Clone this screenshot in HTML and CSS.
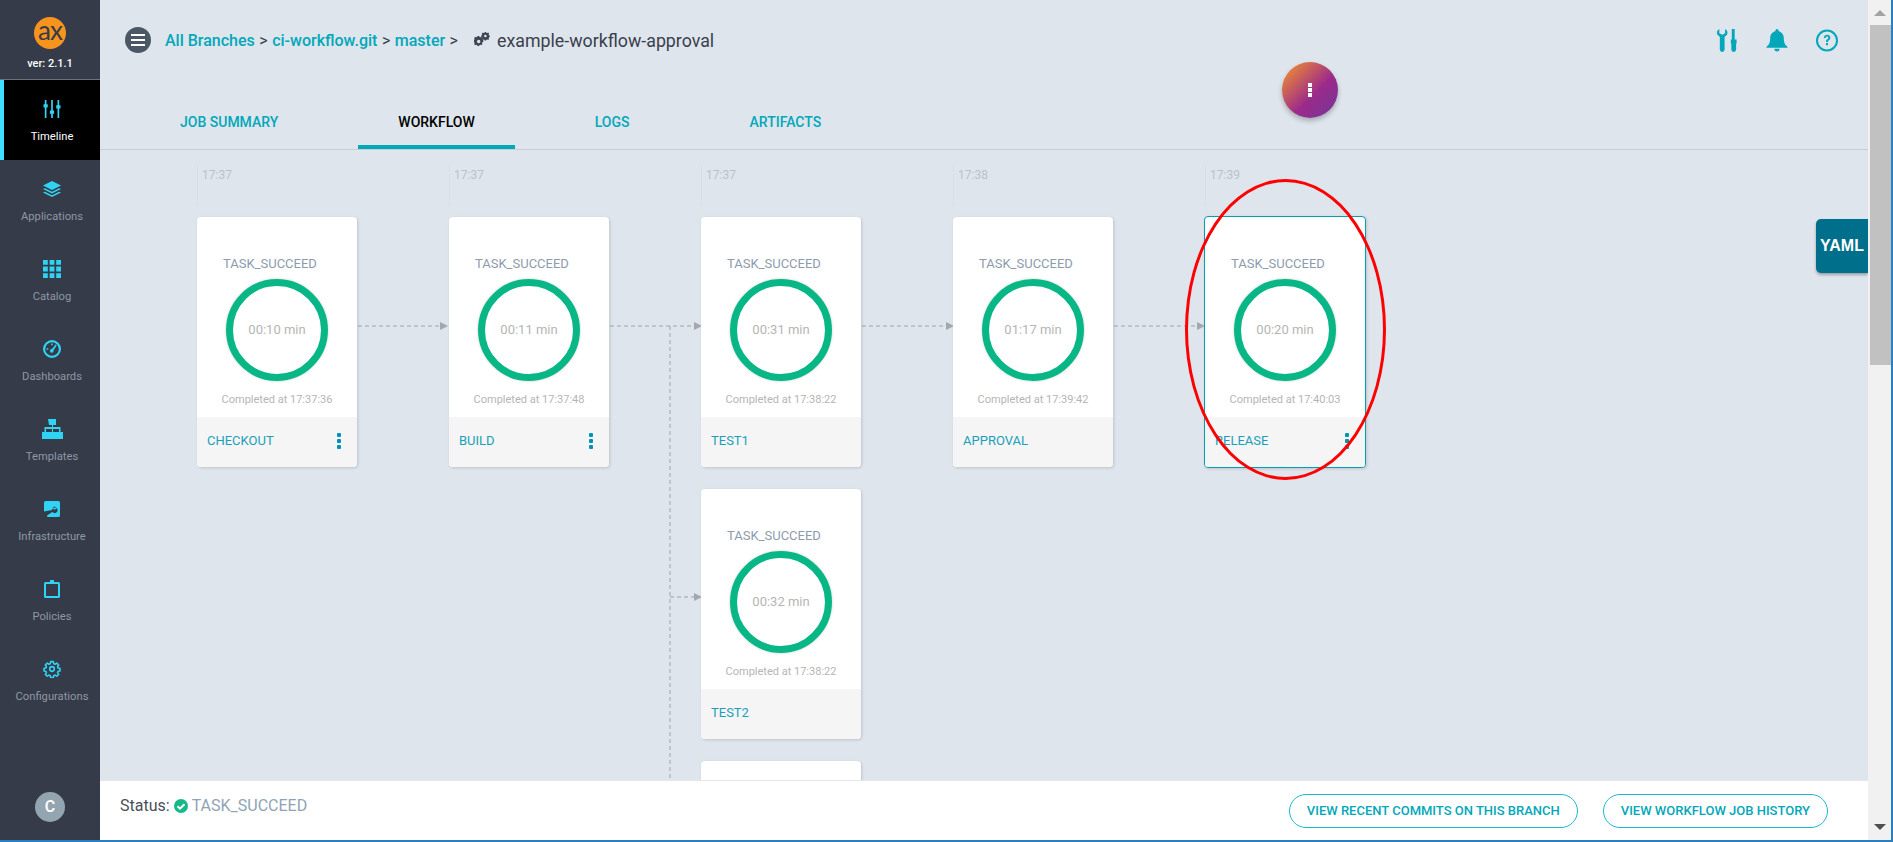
FILE: index.html
```html
<!DOCTYPE html>
<html lang="en">
<head>
  <meta charset="UTF-8" />
  <title>example-workflow-approval</title>
  <link rel="stylesheet" href="styles.css">
</head>
<body>
<div class="window">

  <nav class="sidebar">
    <div class="brand">
      <div class="logo">ax</div>
      <div class="version">ver: 2.1.1</div>
    </div>
    <a class="nav-item active">
      <svg class="nav-icon" viewBox="0 0 16 17"><path d="M1.200 0h1.600v4h1.200v3h-1.200v10h-1.600v-10h-1.200v-3h1.200zM7.200 0h1.600v10h1.200v3h-1.200v4h-1.600v-4h-1.200v-3h1.200zM13.200 0h1.600v5h1.200v3h-1.200v9h-1.600v-9h-1.200v-3h1.200z"/></svg>
      <span>Timeline</span>
    </a>
    <a class="nav-item">
      <svg class="nav-icon" viewBox="0 0 18 16"><path d="M9 0l9 4.500-9 4.500-9-4.500zM1.800 7.200l7.200 3.600 7.200-3.600 1.800.9-9 4.500-9-4.500zM1.800 10.700l7.200 3.600 7.200-3.600 1.800.8-9 4.500-9-4.500z"/></svg>
      <span>Applications</span>
    </a>
    <a class="nav-item">
      <svg class="nav-icon" viewBox="0 0 15 15"><path d="M0 0h4v4h-4zM5.500 0h4v4h-4zM11 0h4v4h-4zM0 5.500h4v4h-4zM5.500 5.500h4v4h-4zM11 5.500h4v4h-4zM0 11h4v4h-4zM5.500 11h4v4h-4zM11 11h4v4h-4z"/></svg>
      <span>Catalog</span>
    </a>
    <a class="nav-item">
      <svg class="nav-icon" viewBox="0 0 18 18"><path fill-rule="evenodd" d="M9 0a9 9 0 1 1 0 18a9 9 0 0 1 0-18zM9 2.200a6.800 6.800 0 1 0 0 13.600a6.800 6.800 0 0 0 0-13.600zM8.200 3.500h1.600v1.800h-1.600zM3.500 8.200h1.800v1.600h-1.800zM12.800 4.200l1 1-3.300 5.200a1.800 1.800 0 1 1-1.500-1.300z"/></svg>
      <span>Dashboards</span>
    </a>
    <a class="nav-item">
      <svg class="nav-icon wide" viewBox="0 0 22 20"><path d="M7 0h8v6h-3v2h7.500v5h2.500v7h-7v-7h3v-3h-6v3h3v7h-7v-7h3v-3h-6v3h3v7h-7v-7h2.500v-5h7.500v-2h-3z"/></svg>
      <span>Templates</span>
    </a>
    <a class="nav-item">
      <svg class="nav-icon" viewBox="-1 -1 18 18"><path fill-rule="evenodd" d="M1.500 0h13a1.500 1.500 0 0 1 1.500 1.500v13a1.500 1.500 0 0 1-1.500 1.500h-10c-1 0-1.500-.5-1.500-1.500l4.500-3 1-.5a2.800 2.800 0 1 0-.5-2l-8 1.500v-9a1.500 1.500 0 0 1 1.500-1.500zM10.500 5.500a1.500 1.500 0 1 1 0 3a1.500 1.500 0 0 1 0-3z"/></svg>
      <span>Infrastructure</span>
    </a>
    <a class="nav-item">
      <svg class="nav-icon" viewBox="0 0 16 18"><path fill-rule="evenodd" d="M6 0h4v2h4.500a1.500 1.500 0 0 1 1.500 1.500v13a1.500 1.500 0 0 1-1.500 1.500h-13a1.500 1.500 0 0 1-1.500-1.500v-13a1.500 1.500 0 0 1 1.500-1.500h4.500zM2 4v12h12v-12z"/></svg>
      <span>Policies</span>
    </a>
    <a class="nav-item">
      <svg class="nav-icon" viewBox="-1.500 -1.500 27 27"><path d="M12 8.500a3.500 3.500 0 1 0 0 7a3.500 3.500 0 0 0 0-7zM10 1h4l.6 3 2 .9 2.600-1.700 2.800 2.800-1.700 2.600.9 2 2.800.4v4l-2.800.4-.9 2 1.700 2.600-2.800 2.800-2.600-1.700-2 .9-.6 3h-4l-.6-3-2-.9-2.600 1.700-2.800-2.800 1.700-2.600-.9-2-2.800-.4v-4l2.800-.4.9-2-1.700-2.600 2.800-2.800 2.600 1.700 2-.9z" fill="none" stroke="#2fd3f3" stroke-width="2.400" stroke-linejoin="round"/></svg>
      <span>Configurations</span>
    </a>
    <div class="avatar">C</div>
  </nav>

  <main class="content">
    <header class="topbar">
      <div class="title-row">
        <button class="menu-btn"><i></i><i></i><i></i></button>
        <div class="crumbs">
          <a>All Branches</a> &gt; <a>ci-workflow.git</a> &gt; <a>master</a> &gt;
          <svg class="cogs" viewBox="0 0 16 16"><path fill-rule="evenodd" d="M5.500 5l1 .3.800-.5 1.200 1.200-.5.800.3 1 1 .3v1.800l-1 .3-.3 1 .5.800-1.200 1.200-.8-.5-1 .3-.3 1h-1.800l-.3-1-1-.3-.8.5-1.200-1.200.5-.8-.3-1-1-.3v-1.800l1-.3.300-1-.5-.8 1.200-1.200.8.500 1-.3.300-1h1.800zM4.700 7.800a1.700 1.700 0 1 0 0 3.400a1.700 1.700 0 0 0 0-3.400zM12 0l.5.900.9.100.7-.4 1 1-.4.700.2.900.8.400v1.400l-.8.400-.2.900.4.700-1 1-.7-.4-.9.200-.5.800h-1.200l-.4-.8-.9-.2-.7.400-1-1 .4-.7-.2-.9-.8-.4v-1.400l.8-.4.2-.9-.4-.7 1-1 .7.400.9-.1.400-.9zM11.400 2.700a1.300 1.300 0 1 0 0 2.600a1.300 1.300 0 0 0 0-2.600z"/></svg>
          <span class="job-name">example-workflow-approval</span>
        </div>
        <div class="top-icons">
          <svg viewBox="0 0 21 24"><path d="M0 4C0 2 1 .8 2.500 0v4.500l3 1.500 3-1.500V0C10 .8 11 2 11 4c0 2-1 3-3 4v13.500a2.500 2.500 0 0 1-5 0V8C1 7 0 6 0 4zM15.500 0h3v11h2v4l-.5.500v6a2.500 2.500 0 0 1-5 0v-6l-.5-.5v-4h1z"/></svg>
          <svg viewBox="0 0 20 22"><path d="M10 0a1.500 1.500 0 0 1 1.500 1.500v.6c3 .7 5 3.300 5 6.400 0 4.500 1.200 6.500 3.500 8.500v1h-20v-1c2.300-2 3.500-4 3.500-8.500 0-3.100 2-5.700 5-6.400v-.6a1.500 1.500 0 0 1 1.500-1.500zM7.500 19h5a2.500 2.500 0 0 1-5 0z"/></svg>
          <svg class="help" viewBox="0 0 22 22"><circle cx="11" cy="11" r="10" fill="none" stroke="#02a7ba" stroke-width="2"/><path d="M7.800 8.500c0-1.900 1.400-3.200 3.300-3.200s3.200 1.200 3.200 2.900c0 2.300-2.400 2.400-2.400 4.300h-1.900c0-2.900 2.300-2.900 2.300-4.300 0-.7-.6-1.200-1.300-1.200s-1.300.6-1.300 1.500zM10 13.500h2v2.200h-2z"/></svg>
        </div>
      </div>
      <div class="tabs">
        <a class="tab">JOB SUMMARY</a>
        <a class="tab active">WORKFLOW</a>
        <a class="tab">LOGS</a>
        <a class="tab">ARTIFACTS</a>
      </div>
    </header>

    <button class="fab"><i></i><i></i><i></i></button>

    <section class="canvas">
      <svg class="links" width="1768" height="630">
        <g class="dash">
          <path d="M258 176H340M510 176H594M762 176H845M1014 176H1096M570 176V630M570 447H594"/>
        </g>
        <g class="heads">
          <path d="M340 172l8 4-8 4zM594 172l8 4-8 4zM846 172l8 4-8 4zM1097 172l8 4-8 4zM594 443l8 4-8 4z"/>
        </g>
      </svg>

      <div class="col">
        <div class="time">17:37</div>
        <div class="card">
          <div class="card-body">
            <div class="state">TASK_SUCCEED</div>
            <div class="ring">00:10 min</div>
            <div class="done">Completed at 17:37:36</div>
          </div>
          <div class="card-foot"><span>CHECKOUT</span><b class="dots"><i></i><i></i><i></i></b></div>
        </div>
      </div>

      <div class="col">
        <div class="time">17:37</div>
        <div class="card">
          <div class="card-body">
            <div class="state">TASK_SUCCEED</div>
            <div class="ring">00:11 min</div>
            <div class="done">Completed at 17:37:48</div>
          </div>
          <div class="card-foot"><span>BUILD</span><b class="dots"><i></i><i></i><i></i></b></div>
        </div>
      </div>

      <div class="col">
        <div class="time">17:37</div>
        <div class="card">
          <div class="card-body">
            <div class="state">TASK_SUCCEED</div>
            <div class="ring">00:31 min</div>
            <div class="done">Completed at 17:38:22</div>
          </div>
          <div class="card-foot"><span>TEST1</span></div>
        </div>
        <div class="card">
          <div class="card-body">
            <div class="state">TASK_SUCCEED</div>
            <div class="ring">00:32 min</div>
            <div class="done">Completed at 17:38:22</div>
          </div>
          <div class="card-foot"><span>TEST2</span></div>
        </div>
        <div class="card">
          <div class="card-body"></div>
        </div>
      </div>

      <div class="col">
        <div class="time">17:38</div>
        <div class="card">
          <div class="card-body">
            <div class="state">TASK_SUCCEED</div>
            <div class="ring">01:17 min</div>
            <div class="done">Completed at 17:39:42</div>
          </div>
          <div class="card-foot"><span>APPROVAL</span></div>
        </div>
      </div>

      <div class="col">
        <div class="time">17:39</div>
        <div class="card selected">
          <div class="card-body">
            <div class="state">TASK_SUCCEED</div>
            <div class="ring">00:20 min</div>
            <div class="done">Completed at 17:40:03</div>
          </div>
          <div class="card-foot"><span>RELEASE</span><b class="dots"><i></i><i></i><i></i></b></div>
        </div>
      </div>

      <div class="yaml">YAML</div>
      <div class="red-mark"></div>
    </section>

    <footer class="statusbar">
      <div class="status">
        Status:
        <svg class="check" viewBox="0 0 14 14"><circle cx="7" cy="7" r="7" fill="#17b987"/><path d="M3.500 7.200l2.500 2.500 4.500-4.500" fill="none" stroke="#fff" stroke-width="2"/></svg>
        <span>TASK_SUCCEED</span>
      </div>
      <div class="actions">
        <a class="pill">VIEW RECENT COMMITS ON THIS BRANCH</a>
        <a class="pill">VIEW WORKFLOW JOB HISTORY</a>
      </div>
    </footer>
  </main>

  <div class="scrollbar">
    <div class="arrow up"></div>
    <div class="thumb"></div>
    <div class="arrow down"></div>
  </div>
</div>
</body>
</html>
```

FILE: styles.css
```css
* {
  box-sizing: border-box;
}
html, body {
  height: 100%;
  margin: 0;
  overflow: hidden;
}
body {
  font-family: Roboto, "Liberation Sans", sans-serif;
  background-color: #dee5ec;
  color: #3a3f4d;
}
.window {
  display: flex;
  height: 100vh;
  border-right: 2px solid #2a7fc1;
  border-bottom: 2px solid #2a7fc1;
}

/* sidebar */
.sidebar {
  width: 100px;
  flex: none;
  background-color: #353b49;
  display: flex;
  flex-direction: column;
}
.brand {
  height: 80px;
  border-bottom: 1px solid #6d727c;
  display: flex;
  flex-direction: column;
  align-items: center;
  padding-top: 17px;
}
.logo {
  width: 32px;
  height: 32px;
  border-radius: 50%;
  background-color: #f7941d;
  color: #353b49;
  font-family: Lato, sans-serif;
  font-size: 26px;
  letter-spacing: -1px;
  line-height: 27px;
  text-align: center;
}
.version {
  margin-top: 8px;
  color: #fff;
  font-size: 11px;
  font-weight: 500;
}
.nav-item {
  height: 80px;
  padding: 20px 0 0 4px;
  display: flex;
  flex-direction: column;
  align-items: center;
  color: #8e98a5;
  font-size: 11.200px;
}
.nav-item span {
  margin-top: 12px;
  line-height: 14px;
}
.nav-item.active {
  background-color: #000;
  color: #fff;
  border-left: 4px solid #3fe0ff;
  padding-left: 0;
}
.nav-icon {
  width: 18px;
  height: 18px;
  flex: none;
  fill: #2fd3f3;
}
.nav-icon.wide {
  width: 22px;
  height: 20px;
  margin: -1px 0;
}
.avatar {
  width: 30px;
  height: 30px;
  margin: auto 0 18px 35px;
  border-radius: 50%;
  background-color: #93a5b1;
  color: #fff;
  font-size: 16px;
  font-weight: 500;
  line-height: 30px;
  text-align: center;
}

/* header */
.content {
  flex: 1;
  min-width: 0;
  position: relative;
  display: flex;
  flex-direction: column;
}
.topbar {
  height: 150px;
  flex: none;
  border-bottom: 1px solid #c8ced2;
}
.title-row {
  height: 80px;
  padding: 0 30px 0 25px;
  display: flex;
  align-items: center;
}
.menu-btn {
  width: 26px;
  height: 26px;
  padding: 0;
  border: none;
  border-radius: 50%;
  background-color: #4a5764;
  display: flex;
  flex-direction: column;
  justify-content: center;
  gap: 3px;
  align-items: center;
}
.menu-btn i {
  width: 14px;
  height: 2px;
  background-color: #fff;
}
.crumbs {
  margin-left: 14px;
  display: flex;
  align-items: center;
  gap: 4.500px;
  font-size: 16px;
  color: #3a3f4d;
}
.crumbs a {
  color: #02a7ba;
  font-weight: 500;
}
.cogs {
  width: 16px;
  height: 16px;
  margin-left: 12px;
  fill: #3f4552;
}
.job-name {
  margin-left: 2px;
  font-size: 17.800px;
}
.top-icons {
  margin-left: auto;
  display: flex;
  align-items: center;
  gap: 28px;
}
.top-icons svg {
  width: 22px;
  height: 23px;
  fill: #02a7ba;
}
.tabs {
  display: flex;
  padding-left: 40px;
  height: 69px;
  align-items: flex-end;
}
.tab {
  margin-right: 40px;
  padding: 0 40px;
  height: 36px;
  font-size: 14px;
  font-weight: 500;
  line-height: 18px;
  color: #02a7ba;
}
.tab.active {
  color: #000;
  border-bottom: 4px solid #02a7ba;
}

.fab {
  position: absolute;
  left: 1182px;
  top: 62px;
  width: 56px;
  height: 56px;
  padding: 0;
  border: none;
  border-radius: 50%;
  background: linear-gradient(135deg, #ed8a35 8%, #9c2a8a 58%, #70389a 100%);
  box-shadow: 0 3px 5px rgba(0, 0, 0, 0.25);
  display: flex;
  flex-direction: column;
  align-items: center;
  justify-content: center;
  gap: 1px;
  z-index: 2;
}
.fab i {
  width: 4px;
  height: 4px;
  background-color: #fff;
}

/* workflow */
.canvas {
  flex: 1;
  min-height: 0;
  position: relative;
  overflow: hidden;
  padding: 15px 0 0 97px;
  display: flex;
  align-items: flex-start;
  gap: 92px;
}
.links {
  position: absolute;
  left: 0;
  top: 0;
}
.dash path {
  fill: none;
  stroke: #9aa5ad;
  stroke-width: 1;
  stroke-dasharray: 4 3;
}
.heads path {
  fill: #a5a8aa;
}
.col {
  width: 160px;
  flex: none;
  position: relative;
}
.time {
  height: 41px;
  margin-bottom: 11px;
  padding-left: 4px;
  border-left: 1px solid #d8dee3;
  font-size: 12px;
  line-height: 20px;
  color: #bcc2c7;
}
.card {
  height: 250px;
  margin-bottom: 22px;
  border-radius: 4px;
  background-color: #fff;
  box-shadow: 1px 1px 3px rgba(0, 0, 0, 0.15);
  overflow: hidden;
  display: flex;
  flex-direction: column;
}
.card.selected {
  border: 1px solid #02a0b4;
  margin-top: -1px;
  margin-left: -1px;
  width: 162px;
  height: 252px;
}
.card-body {
  height: 200px;
  flex: none;
  padding-top: 39px;
  display: flex;
  flex-direction: column;
  align-items: center;
}
.state {
  align-self: flex-start;
  padding-left: 26px;
  font-size: 13px;
  line-height: 16px;
  color: #8d9bad;
}
.ring {
  width: 102px;
  height: 102px;
  margin-top: 7px;
  border: 7px solid #09b686;
  border-radius: 50%;
  box-shadow: 0 0 3px rgba(0, 0, 0, 0.2);
  font-size: 13px;
  line-height: 88px;
  text-align: center;
  color: #b5b5b5;
}
.done {
  margin-top: 12px;
  font-size: 11px;
  line-height: 14px;
  color: #b5b5b5;
}
.card-foot {
  flex: 1;
  background-color: #f5f5f5;
  padding: 0 12px 3px 10px;
  display: flex;
  align-items: center;
  justify-content: space-between;
  font-size: 13px;
  color: #1a9fba;
}
.dots {
  display: flex;
  flex-direction: column;
  gap: 2px;
  padding-right: 4px;
}
.dots i {
  width: 4px;
  height: 4px;
  border-radius: 1px;
  background-color: #0094b4;
}
.yaml {
  position: absolute;
  right: 0;
  top: 69px;
  width: 52px;
  height: 54px;
  border-radius: 5px 0 0 5px;
  background-color: #006f8c;
  box-shadow: 0 2px 3px rgba(0, 0, 0, 0.3);
  color: #fff;
  font-family: "Liberation Sans", Arial, sans-serif;
  font-size: 16px;
  font-weight: bold;
  line-height: 54px;
  text-align: center;
}
.red-mark {
  position: absolute;
  left: 1085px;
  top: 29px;
  width: 201px;
  height: 301px;
  border: 3px solid #f00;
  border-radius: 50%;
}

/* footer */
.statusbar {
  height: 60px;
  flex: none;
  background-color: #fff;
  border-top: 1px solid #e6e6e6;
  padding: 0 40px 0 20px;
  display: flex;
  align-items: center;
  justify-content: space-between;
}
.status {
  display: flex;
  align-items: center;
  gap: 4px;
  font-size: 16px;
  color: #4a4f5a;
  margin-top: -10px;
}
.status span {
  color: #8fa3b5;
}
.check {
  width: 14px;
  height: 14px;
}
.actions {
  display: flex;
  gap: 25px;
}
.pill {
  height: 34px;
  padding: 0 17px;
  border: 1px solid #1cb8cf;
  border-radius: 17px;
  font-size: 13px;
  font-weight: 500;
  line-height: 32px;
  color: #02a7ba;
}

/* scrollbar */
.scrollbar {
  width: 23px;
  flex: none;
  background-color: #f1f1f1;
  display: flex;
  flex-direction: column;
  align-items: center;
}
.thumb {
  width: 21px;
  height: 340px;
  margin-left: 2px;
  background-color: #c1c1c1;
}
.arrow {
  width: 0;
  height: 0;
  border-left: 6px solid transparent;
  border-right: 6px solid transparent;
}
.arrow.up {
  margin: 10px 0 9px;
  border-bottom: 6px solid #a3a3a3;
}
.arrow.down {
  margin-top: auto;
  margin-bottom: 10px;
  border-top: 6px solid #505050;
}
```
